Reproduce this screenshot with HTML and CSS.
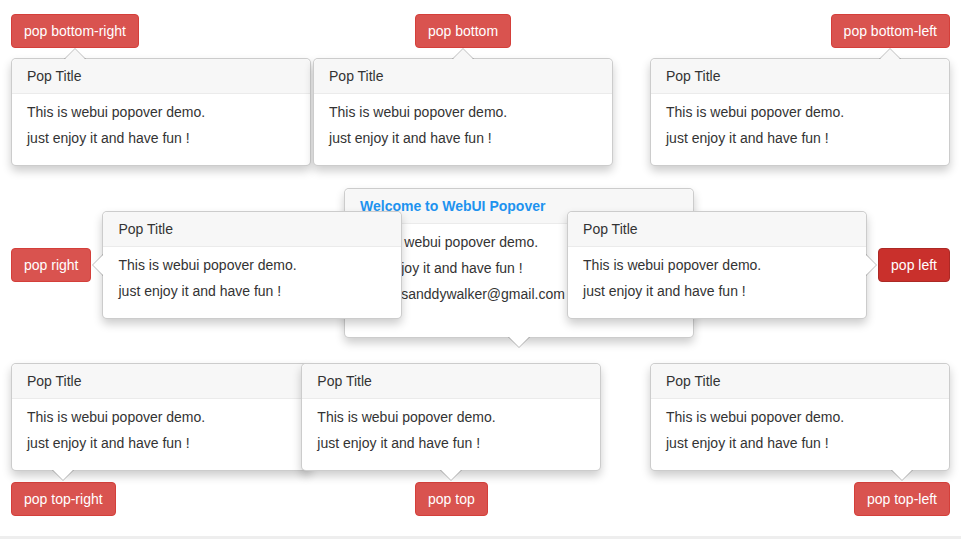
FILE: index.html
```html
<!DOCTYPE html>
<html lang="en">
<head>
<meta charset="utf-8">
<title>WebUI Popover Demo</title>
<link rel="stylesheet" href="styles.css">
</head>
<body>
<div class="page">
  <div class="row">
    <div class="cell cell-start">
      <div class="anchor">
        <button class="btn">pop bottom-right</button>
        <div class="popover below align-start">
          <div class="pop-title">Pop Title</div>
          <div class="pop-content"><p>This is webui popover demo.</p><p>just enjoy it and have fun !</p></div>
        </div>
        <span class="arrow arrow-up"></span>
      </div>
    </div>
    <div class="cell cell-start">
      <div class="anchor">
        <button class="btn">pop bottom</button>
        <div class="popover below align-center">
          <div class="pop-title">Pop Title</div>
          <div class="pop-content"><p>This is webui popover demo.</p><p>just enjoy it and have fun !</p></div>
        </div>
        <span class="arrow arrow-up"></span>
      </div>
    </div>
    <div class="cell cell-end">
      <div class="anchor">
        <button class="btn">pop bottom-left</button>
        <div class="popover below align-end">
          <div class="pop-title">Pop Title</div>
          <div class="pop-content"><p>This is webui popover demo.</p><p>just enjoy it and have fun !</p></div>
        </div>
        <span class="arrow arrow-up"></span>
      </div>
    </div>
  </div>

  <div class="popover popover-wide center-pop">
    <div class="pop-title pop-title-accent">Welcome to WebUI Popover</div>
    <div class="pop-content pop-content-tall"><p>This is webui popover demo.</p><p>just enjoy it and have fun !</p><p>email: sanddywalker@gmail.com</p></div>
    <span class="arrow arrow-down-in"></span>
  </div>

  <div class="row row-gap">
    <div class="cell cell-start">
      <div class="anchor">
        <button class="btn">pop right</button>
        <div class="popover right-of">
          <div class="pop-title">Pop Title</div>
          <div class="pop-content"><p>This is webui popover demo.</p><p>just enjoy it and have fun !</p></div>
        </div>
        <span class="arrow arrow-left"></span>
      </div>
    </div>
    <div class="cell"></div>
    <div class="cell cell-end">
      <div class="anchor">
        <button class="btn btn-active">pop left</button>
        <div class="popover left-of">
          <div class="pop-title">Pop Title</div>
          <div class="pop-content"><p>This is webui popover demo.</p><p>just enjoy it and have fun !</p></div>
        </div>
        <span class="arrow arrow-right"></span>
      </div>
    </div>
  </div>

  <div class="row row-gap">
    <div class="cell cell-start">
      <div class="anchor">
        <button class="btn">pop top-right</button>
        <div class="popover above align-start">
          <div class="pop-title">Pop Title</div>
          <div class="pop-content"><p>This is webui popover demo.</p><p>just enjoy it and have fun !</p></div>
        </div>
        <span class="arrow arrow-down"></span>
      </div>
    </div>
    <div class="cell cell-start">
      <div class="anchor">
        <button class="btn">pop top</button>
        <div class="popover above align-center">
          <div class="pop-title">Pop Title</div>
          <div class="pop-content"><p>This is webui popover demo.</p><p>just enjoy it and have fun !</p></div>
        </div>
        <span class="arrow arrow-down"></span>
      </div>
    </div>
    <div class="cell cell-end">
      <div class="anchor">
        <button class="btn">pop top-left</button>
        <div class="popover above align-end">
          <div class="pop-title">Pop Title</div>
          <div class="pop-content"><p>This is webui popover demo.</p><p>just enjoy it and have fun !</p></div>
        </div>
        <span class="arrow arrow-down"></span>
      </div>
    </div>
  </div>
</div>
<div class="bottom-bar"></div>
</body>
</html>
```

FILE: styles.css
```css
html, body {
  margin: 0;
  padding: 0;
  background: #fff;
  overflow: hidden;
}
body {
  font-family: "Liberation Sans", Arial, sans-serif;
  font-size: 14px;
  color: #333;
  height: 539px;
}
.page {
  position: relative;
  height: 522px;
  padding: 14px 11px 0;
}
.row {
  display: grid;
  grid-template-columns: 404px 1fr 1fr;
  height: 34px;
}
.row-gap {
  margin-top: 200px;
}
.cell {
  display: flex;
}
.cell-start { justify-content: flex-start; }
.cell-end { justify-content: flex-end; }

.anchor {
  position: relative;
  display: inline-block;
  height: 34px;
}
.btn {
  display: block;
  font-family: inherit;
  font-size: 14px;
  line-height: 20px;
  padding: 6px 12px;
  color: #fff;
  background: #d9534f;
  border: 1px solid #d43f3a;
  border-radius: 4px;
  white-space: nowrap;
  cursor: pointer;
}
.btn-active {
  background: #c9302c;
  border-color: #ac2925;
}

.popover {
  position: absolute;
  box-sizing: border-box;
  width: 300px;
  background: #fff;
  border: 1px solid rgba(0, 0, 0, 0.2);
  border-radius: 5px;
  box-shadow: 0 5px 10px rgba(0, 0, 0, 0.2);
  text-align: left;
}
.pop-title {
  padding: 8px 14px 8px 15px;
  line-height: 18px;
  font-size: 14px;
  background: #f7f7f7;
  border-bottom: 1px solid #ebebeb;
  border-radius: 5px 5px 0 0;
  white-space: nowrap;
}
.pop-title-accent {
  color: #1e93ef;
  font-weight: bold;
}
.pop-content {
  padding: 9px 14px 10px 15px;
  line-height: 18px;
  white-space: nowrap;
}
.pop-content p {
  margin: 0 0 8px;
}
.pop-content-tall {
  padding-bottom: 26px;
}

.below { top: calc(100% + 10px); }
.above { bottom: calc(100% + 11px); }
.align-start { left: 0; }
.align-end { right: 0; }
.align-center { left: 50%; margin-left: -150px; }
.right-of { left: calc(100% + 11px); top: 50%; margin-top: -54px; }
.left-of { right: calc(100% + 11px); top: 50%; margin-top: -54px; }

.popover-wide { width: 350px; }
.center-pop { left: 344px; top: 188px; }

.arrow {
  position: absolute;
  width: 0;
  height: 0;
  border: 11px solid transparent;
}
.arrow::after {
  content: "";
  position: absolute;
  width: 0;
  height: 0;
  border: 10px solid transparent;
}
.arrow-up {
  top: 100%;
  left: 50%;
  margin-left: -11px;
  border-top-width: 0;
  border-bottom-color: rgba(0, 0, 0, 0.25);
}
.arrow-up::after {
  top: 1px;
  left: 50%;
  margin-left: -10px;
  border-top-width: 0;
  border-bottom-color: #f7f7f7;
}
.arrow-down {
  bottom: calc(100% + 1px);
  left: 50%;
  margin-left: -11px;
  border-bottom-width: 0;
  border-top-color: rgba(0, 0, 0, 0.25);
}
.arrow-down::after {
  bottom: 1px;
  left: 50%;
  margin-left: -10px;
  border-bottom-width: 0;
  border-top-color: #fff;
}
.arrow-down-in {
  bottom: -11px;
  left: 50%;
  margin-left: -11px;
  border-bottom-width: 0;
  border-top-color: rgba(0, 0, 0, 0.25);
}
.arrow-down-in::after {
  bottom: 1px;
  left: 50%;
  margin-left: -10px;
  border-bottom-width: 0;
  border-top-color: #fff;
}
.arrow-left {
  left: calc(100% + 1px);
  top: 50%;
  margin-top: -11px;
  border-left-width: 0;
  border-right-color: rgba(0, 0, 0, 0.25);
}
.arrow-left::after {
  left: 1px;
  top: 50%;
  margin-top: -10px;
  border-left-width: 0;
  border-right-color: #fff;
}
.arrow-right {
  right: calc(100% + 1px);
  top: 50%;
  margin-top: -11px;
  border-right-width: 0;
  border-left-color: rgba(0, 0, 0, 0.25);
}
.arrow-right::after {
  right: 1px;
  top: 50%;
  margin-top: -10px;
  border-right-width: 0;
  border-left-color: #fff;
}

.bottom-bar {
  height: 3px;
  background: #eeeeee;
}
```
